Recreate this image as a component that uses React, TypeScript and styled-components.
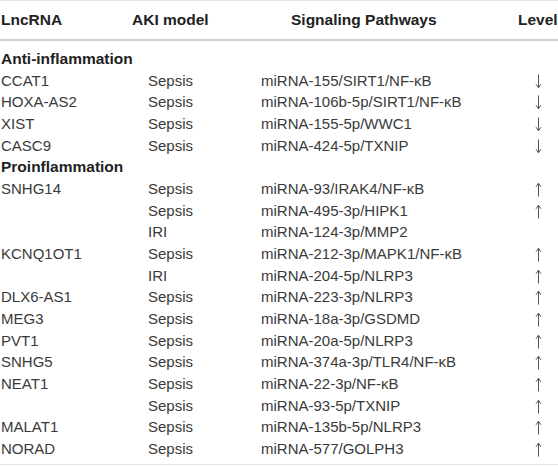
import React from "react";
import styled, { createGlobalStyle } from "styled-components";

const Global = createGlobalStyle`
  html, body { margin: 0; padding: 0; background: #ffffff; }
  body { font-family: "Liberation Sans", Arial, Helvetica, sans-serif; }
`;

const Table = styled.div`
  width: 558px;
  box-sizing: border-box;
  border-top: 1px solid #e2e2e2;
  border-bottom: 1px solid #e2e2e2;
  padding-bottom: 5px;
`;

const HeaderRow = styled.div`
  display: grid;
  grid-template-columns: 131px 159px 227px 1fr;
  padding: 10px 0 10px 1px;
  border-bottom: 2px solid #cfcfcf;
  font-size: 15.5px;
  line-height: 18px;
  font-weight: 700;
  color: #222;
`;

const HeadCell = styled.div`
  white-space: nowrap;
`;

const Body = styled.div`
  padding-top: 7px;
`;

const SectionRow = styled.div`
  height: 21.67px;
  line-height: 21.67px;
  padding-left: 1px;
  font-size: 15.5px;
  font-weight: 700;
  color: #222;
  white-space: nowrap;
`;

const Row = styled.div`
  display: grid;
  grid-template-columns: 147px 113px 1fr 40px;
  height: 21.67px;
  line-height: 21.67px;
  padding-left: 1px;
  font-size: 15px;
  color: #3a3a3a;
`;

const Cell = styled.div`
  white-space: nowrap;
`;

const LevelCell = styled.div`
  display: flex;
  justify-content: center;
  align-items: flex-start;
  padding-top: 4px;
`;

const ArrowSvg = styled.svg`
  display: block;
  width: 7px;
  height: 15px;
`;

const LevelArrow = ({ dir }: { dir: "up" | "down" }) => (
  <ArrowSvg viewBox="0 0 7 15">
    <g
      transform={dir === "down" ? "rotate(180 3.5 7.5)" : undefined}
      stroke="#555"
      fill="none"
      strokeWidth="1"
    >
      <line x1="3.5" y1="1.5" x2="3.5" y2="14.5" />
      <polyline points="1,4.8 3.5,1.2 6,4.8" strokeLinejoin="miter" />
    </g>
  </ArrowSvg>
);

type Entry = { lnc: string; model: string; path: string; level: "" | "up" | "down" };

const anti: Entry[] = [
  { lnc: "CCAT1", model: "Sepsis", path: "miRNA-155/SIRT1/NF-κB", level: "down" },
  { lnc: "HOXA-AS2", model: "Sepsis", path: "miRNA-106b-5p/SIRT1/NF-κB", level: "down" },
  { lnc: "XIST", model: "Sepsis", path: "miRNA-155-5p/WWC1", level: "down" },
  { lnc: "CASC9", model: "Sepsis", path: "miRNA-424-5p/TXNIP", level: "down" },
];

const pro: Entry[] = [
  { lnc: "SNHG14", model: "Sepsis", path: "miRNA-93/IRAK4/NF-κB", level: "up" },
  { lnc: "", model: "Sepsis", path: "miRNA-495-3p/HIPK1", level: "up" },
  { lnc: "", model: "IRI", path: "miRNA-124-3p/MMP2", level: "" },
  { lnc: "KCNQ1OT1", model: "Sepsis", path: "miRNA-212-3p/MAPK1/NF-κB", level: "up" },
  { lnc: "", model: "IRI", path: "miRNA-204-5p/NLRP3", level: "up" },
  { lnc: "DLX6-AS1", model: "Sepsis", path: "miRNA-223-3p/NLRP3", level: "up" },
  { lnc: "MEG3", model: "Sepsis", path: "miRNA-18a-3p/GSDMD", level: "up" },
  { lnc: "PVT1", model: "Sepsis", path: "miRNA-20a-5p/NLRP3", level: "up" },
  { lnc: "SNHG5", model: "Sepsis", path: "miRNA-374a-3p/TLR4/NF-κB", level: "up" },
  { lnc: "NEAT1", model: "Sepsis", path: "miRNA-22-3p/NF-κB", level: "up" },
  { lnc: "", model: "Sepsis", path: "miRNA-93-5p/TXNIP", level: "up" },
  { lnc: "MALAT1", model: "Sepsis", path: "miRNA-135b-5p/NLRP3", level: "up" },
  { lnc: "NORAD", model: "Sepsis", path: "miRNA-577/GOLPH3", level: "up" },
];

const DataRow = ({ e }: { e: Entry }) => (
  <Row>
    <Cell>{e.lnc}</Cell>
    <Cell>{e.model}</Cell>
    <Cell>{e.path}</Cell>
    <LevelCell>{e.level ? <LevelArrow dir={e.level} /> : null}</LevelCell>
  </Row>
);

export default function App() {
  return (
    <>
      <Global />
      <Table>
        <HeaderRow>
          <HeadCell>LncRNA</HeadCell>
          <HeadCell>AKI model</HeadCell>
          <HeadCell>Signaling Pathways</HeadCell>
          <HeadCell>Level</HeadCell>
        </HeaderRow>
        <Body>
          <SectionRow>Anti-inflammation</SectionRow>
          {anti.map((e, i) => (
            <DataRow key={"a" + i} e={e} />
          ))}
          <SectionRow>Proinflammation</SectionRow>
          {pro.map((e, i) => (
            <DataRow key={"p" + i} e={e} />
          ))}
        </Body>
      </Table>
    </>
  );
}
